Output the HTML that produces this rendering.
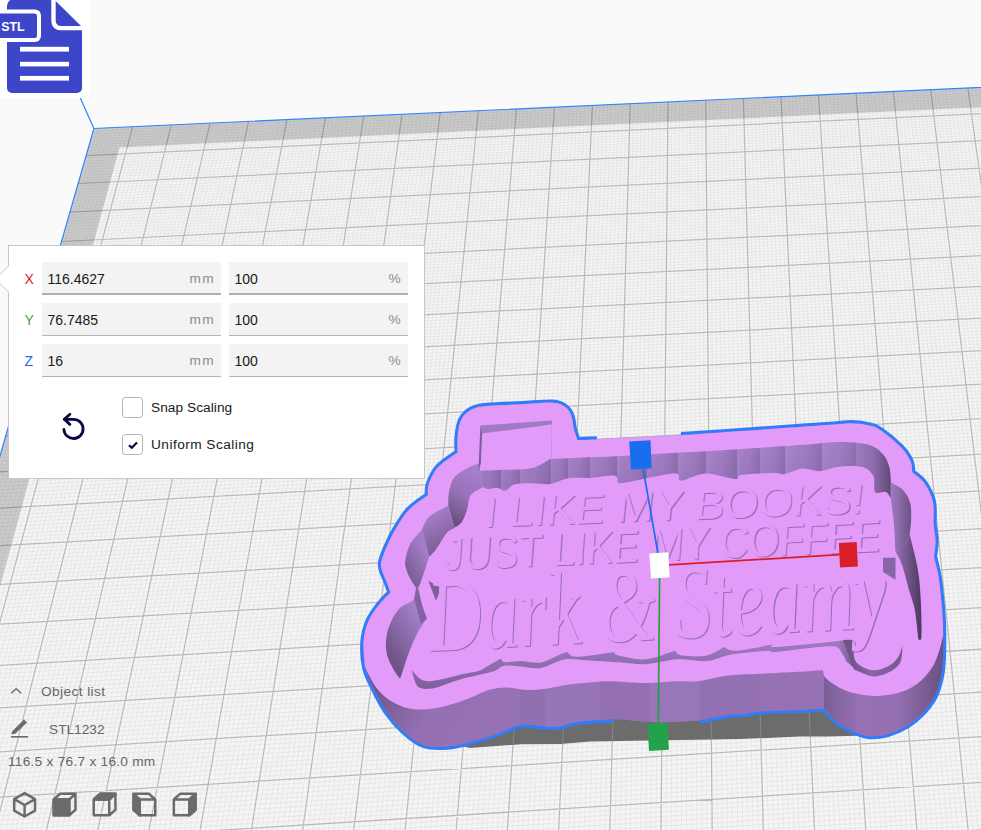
<!DOCTYPE html>
<html><head><meta charset="utf-8"><title>Scale tool</title>
<style>
html,body{margin:0;padding:0}
body{width:981px;height:830px;overflow:hidden;background:#fafafa;position:relative;font-family:"Liberation Sans",sans-serif;font-size:13.7px;color:#191919}
#scene{position:absolute;left:0;top:0}
.abs{position:absolute}
#icon{position:absolute;left:0;top:0;width:91px;height:98px;background:#fff}
#panel{position:absolute;left:8px;top:245px;width:415px;height:232px;background:#fff;border:1px solid #c6c7c8}
.fld{position:absolute;height:32px;background:#f3f3f3;border-bottom:1px solid #b4b4b4;width:179px}
.fld.f{border-bottom:2px solid #b0b0b0;height:31px}
.fld .v{position:absolute;left:5.500px;top:0.600px;line-height:32px;color:#191919;font-size:14px}
.fld .u{position:absolute;right:6px;top:0.600px;line-height:32px;color:#8c8c8c;letter-spacing:1.3px}
.ax{position:absolute;left:16px;width:12px;line-height:32px;font-size:14px;margin-top:-0.500px;margin-left:-0.500px}
.cb{position:absolute;left:113px;width:19px;height:19px;border:1px solid #b4b4b4;border-radius:3.5px;background:#fff}
.cl{position:absolute;left:142px;line-height:21px;white-space:nowrap;letter-spacing:0.05px}
.scn{color:#666;position:absolute;white-space:nowrap}
</style></head><body>
<svg id="scene" width="981" height="830" viewBox="0 0 981 830">
<polygon points="93.9,128.5 1226.9,76.1 1460.4,950.2 -173.4,1060.8" fill="#f5f5f5"/>
<path d="M97.8 128.3L-167.7 1060.4M101.6 128.2L-162.1 1060M105.5 128L-156.4 1059.7M109.4 127.8L-150.8 1059.3M113.3 127.6L-145.1 1058.9M117.2 127.4L-139.5 1058.5M121 127.3L-133.8 1058.1M124.9 127.1L-128.2 1057.7M128.8 126.9L-122.5 1057.4M136.5 126.5L-111.2 1056.6M140.4 126.4L-105.6 1056.2M144.3 126.2L-99.9 1055.8M148.1 126L-94.3 1055.4M152 125.8L-88.7 1055.1M155.9 125.7L-83 1054.7M159.7 125.5L-77.4 1054.3M163.6 125.3L-71.7 1053.9M167.5 125.1L-66.1 1053.5M175.2 124.8L-54.8 1052.8M179.1 124.6L-49.2 1052.4M182.9 124.4L-43.6 1052M186.8 124.2L-38 1051.6M190.7 124L-32.3 1051.3M194.5 123.9L-26.7 1050.9M198.4 123.7L-21.1 1050.5M202.2 123.5L-15.5 1050.1M206.1 123.3L-9.9 1049.7M213.8 123L1.4 1049M217.7 122.8L7 1048.6M221.5 122.6L12.6 1048.2M225.4 122.4L18.2 1047.8M229.2 122.3L23.8 1047.5M233.1 122.1L29.4 1047.1M237 121.9L35 1046.7M240.8 121.7L40.7 1046.3M244.7 121.5L46.3 1045.9M252.4 121.2L57.5 1045.2M256.2 121L63.1 1044.8M260.1 120.8L68.7 1044.4M263.9 120.7L74.3 1044M267.8 120.5L79.8 1043.7M271.6 120.3L85.4 1043.3M275.5 120.1L91 1042.9M279.3 119.9L96.6 1042.5M283.1 119.8L102.2 1042.1M290.8 119.4L113.4 1041.4M294.7 119.2L119 1041M298.5 119L124.6 1040.6M302.4 118.9L130.1 1040.3M306.2 118.7L135.7 1039.9M310 118.5L141.3 1039.5M313.9 118.3L146.9 1039.1M317.7 118.2L152.5 1038.7M321.6 118L158 1038.4M329.2 117.6L169.2 1037.6M333.1 117.4L174.7 1037.2M336.9 117.3L180.3 1036.9M340.7 117.1L185.9 1036.5M344.6 116.9L191.5 1036.1M348.4 116.7L197 1035.7M352.3 116.6L202.6 1035.4M356.1 116.4L208.1 1035M359.9 116.2L213.7 1034.6M367.6 115.9L224.8 1033.9M371.4 115.7L230.4 1033.5M375.2 115.5L235.9 1033.1M379.1 115.3L241.5 1032.7M382.9 115.1L247 1032.3M386.7 115L252.6 1032M390.5 114.8L258.1 1031.6M394.4 114.6L263.7 1031.2M398.2 114.4L269.2 1030.8M405.8 114.1L280.3 1030.1M409.7 113.9L285.9 1029.7M413.5 113.7L291.4 1029.3M417.3 113.6L296.9 1029M421.1 113.4L302.5 1028.6M425 113.2L308 1028.2M428.8 113L313.5 1027.8M432.6 112.8L319.1 1027.5M436.4 112.7L324.6 1027.1M444 112.3L335.7 1026.4M447.9 112.1L341.2 1026M451.7 112L346.7 1025.6M455.5 111.8L352.2 1025.2M459.3 111.6L357.8 1024.9M463.1 111.4L363.3 1024.5M466.9 111.3L368.8 1024.1M470.7 111.1L374.3 1023.7M474.5 110.9L379.8 1023.4M482.2 110.5L390.9 1022.6M486 110.4L396.4 1022.2M489.8 110.2L401.9 1021.9M493.6 110L407.4 1021.5M497.4 109.8L412.9 1021.1M501.2 109.7L418.4 1020.8M505 109.5L423.9 1020.4M508.8 109.3L429.4 1020M512.6 109.1L434.9 1019.6M520.2 108.8L445.9 1018.9M524 108.6L451.4 1018.5M527.8 108.4L456.9 1018.1M531.6 108.3L462.4 1017.8M535.4 108.1L467.9 1017.4M539.2 107.9L473.4 1017M543 107.7L478.9 1016.7M546.8 107.6L484.4 1016.3M550.6 107.4L489.9 1015.9M558.2 107L500.9 1015.2M562 106.9L506.3 1014.8M565.8 106.7L511.8 1014.4M569.6 106.5L517.3 1014.1M573.4 106.3L522.8 1013.7M577.2 106.2L528.3 1013.3M581 106L533.7 1012.9M584.8 105.8L539.2 1012.6M588.6 105.6L544.7 1012.2M596.1 105.3L555.6 1011.5M599.9 105.1L561.1 1011.1M603.7 104.9L566.6 1010.7M607.5 104.7L572.1 1010.4M611.3 104.6L577.5 1010M615.1 104.4L583 1009.6M618.9 104.2L588.4 1009.2M622.6 104L593.9 1008.9M626.4 103.9L599.4 1008.5M634 103.5L610.3 1007.8M637.8 103.3L615.7 1007.4M641.6 103.2L621.2 1007M645.3 103L626.6 1006.7M649.1 102.8L632.1 1006.3M652.9 102.6L637.5 1005.9M656.7 102.5L643 1005.6M660.5 102.3L648.4 1005.2M664.2 102.1L653.9 1004.8M671.8 101.8L664.8 1004.1M675.6 101.6L670.2 1003.7M679.3 101.4L675.7 1003.3M683.1 101.3L681.1 1003M686.9 101.1L686.5 1002.6M690.7 100.9L692 1002.2M694.4 100.7L697.4 1001.9M698.2 100.6L702.8 1001.5M702 100.4L708.3 1001.1M709.5 100L719.1 1000.4M713.3 99.9L724.6 1000M717 99.7L730 999.7M720.8 99.5L735.4 999.3M724.6 99.3L740.8 998.9M728.3 99.2L746.3 998.6M732.1 99L751.7 998.2M735.9 98.8L757.1 997.8M739.6 98.6L762.5 997.5M747.2 98.3L773.4 996.7M750.9 98.1L778.8 996.4M754.7 97.9L784.2 996M758.4 97.8L789.6 995.6M762.2 97.6L795 995.3M766 97.4L800.4 994.9M769.7 97.2L805.8 994.5M773.5 97.1L811.2 994.2M777.2 96.9L816.6 993.8M784.7 96.5L827.4 993.1M788.5 96.4L832.8 992.7M792.3 96.2L838.2 992.3M796 96L843.6 992M799.8 95.9L849 991.6M803.5 95.7L854.4 991.2M807.3 95.5L859.8 990.9M811 95.3L865.2 990.5M814.8 95.2L870.6 990.2M822.3 94.8L881.4 989.4M826 94.6L886.8 989.1M829.8 94.5L892.1 988.7M833.5 94.3L897.5 988.3M837.3 94.1L902.9 988M841 93.9L908.3 987.6M844.7 93.8L913.7 987.2M848.5 93.6L919 986.9M852.2 93.4L924.4 986.5M859.7 93.1L935.2 985.8M863.5 92.9L940.5 985.4M867.2 92.7L945.9 985.1M870.9 92.6L951.3 984.7M874.7 92.4L956.7 984.3M878.4 92.2L962 984M882.2 92L967.4 983.6M885.9 91.9L972.8 983.2M889.6 91.7L978.1 982.9M897.1 91.3L988.8 982.2M900.8 91.2L994.2 981.8M904.6 91L999.6 981.4M908.3 90.8L1004.9 981.1M912 90.7L1010.3 980.7M915.8 90.5L1015.6 980.3M919.5 90.3L1021 980M923.2 90.1L1026.3 979.6M927 90L1031.7 979.3M934.4 89.6L1042.4 978.5M938.1 89.4L1047.7 978.2M941.9 89.3L1053 977.8M945.6 89.1L1058.4 977.4M949.3 88.9L1063.7 977.1M953.1 88.8L1069.1 976.7M956.8 88.6L1074.4 976.4M960.5 88.4L1079.7 976M964.2 88.2L1085.1 975.6M971.7 87.9L1095.7 974.9M975.4 87.7L1101.1 974.6M979.1 87.6L1106.4 974.2M982.8 87.4L1111.7 973.8M986.6 87.2L1117.1 973.5M990.3 87L1122.4 973.1M994 86.9L1127.7 972.8M997.7 86.7L1133 972.4M1001.4 86.5L1138.4 972M1008.9 86.2L1149 971.3M1012.6 86L1154.3 971M1016.3 85.8L1159.6 970.6M1020 85.7L1165 970.2M1023.7 85.5L1170.3 969.9M1027.4 85.3L1175.6 969.5M1031.1 85.1L1180.9 969.2M1034.8 85L1186.2 968.8M1038.6 84.8L1191.5 968.4M1046 84.5L1202.1 967.7M1049.7 84.3L1207.4 967.4M1053.4 84.1L1212.7 967M1057.1 83.9L1218 966.6M1060.8 83.8L1223.3 966.3M1064.5 83.6L1228.6 965.9M1068.2 83.4L1233.9 965.6M1071.9 83.3L1239.2 965.2M1075.6 83.1L1244.5 964.9M1083 82.7L1255.1 964.1M1086.7 82.6L1260.4 963.8M1090.4 82.4L1265.7 963.4M1094.1 82.2L1271 963.1M1097.8 82.1L1276.3 962.7M1101.5 81.9L1281.5 962.3M1105.2 81.7L1286.8 962M1108.9 81.5L1292.1 961.6M1112.6 81.4L1297.4 961.3M1120 81L1307.9 960.6M1123.7 80.9L1313.2 960.2M1127.4 80.7L1318.5 959.8M1131.1 80.5L1323.8 959.5M1134.8 80.3L1329 959.1M1138.5 80.2L1334.3 958.8M1142.2 80L1339.6 958.4M1145.9 79.8L1344.9 958.1M1149.6 79.7L1350.1 957.7M1156.9 79.3L1360.7 957M1160.6 79.2L1365.9 956.6M1164.3 79L1371.2 956.3M1168 78.8L1376.4 955.9M1171.7 78.6L1381.7 955.6M1175.4 78.5L1387 955.2M1179.1 78.3L1392.2 954.9M1182.7 78.1L1397.5 954.5M1186.4 78L1402.7 954.1M1193.8 77.6L1413.2 953.4M1197.5 77.4L1418.5 953.1M1201.2 77.3L1423.7 952.7M1204.8 77.1L1429 952.4M1208.5 76.9L1434.2 952M1212.2 76.8L1439.5 951.7M1215.9 76.6L1444.7 951.3M1219.6 76.4L1450 950.9M1223.2 76.3L1455.2 950.6M93.1 131.2L1227.6 78.6M92.3 133.9L1228.3 81.2M91.6 136.6L1229 83.7M90.8 139.3L1229.6 86.3M90 142L1230.3 88.9M89.2 144.7L1231 91.4M88.5 147.4L1231.7 94M87.7 150.2L1232.4 96.6M86.9 152.9L1233.1 99.2M85.3 158.4L1234.5 104.4M84.5 161.2L1235.2 107.1M83.7 163.9L1235.9 109.7M82.9 166.7L1236.6 112.3M82.1 169.5L1237.3 114.9M81.3 172.3L1238 117.6M80.5 175.1L1238.7 120.2M79.7 177.9L1239.4 122.9M78.9 180.7L1240.1 125.6M77.3 186.3L1241.6 130.9M76.5 189.2L1242.3 133.6M75.7 192L1243 136.3M74.9 194.9L1243.7 139M74 197.7L1244.4 141.7M73.2 200.6L1245.2 144.4M72.4 203.5L1245.9 147.1M71.6 206.3L1246.6 149.8M70.7 209.2L1247.4 152.6M69.1 215L1248.8 158.1M68.3 217.9L1249.6 160.8M67.4 220.9L1250.3 163.6M66.6 223.8L1251 166.4M65.7 226.7L1251.8 169.1M64.9 229.7L1252.5 171.9M64 232.6L1253.3 174.7M63.2 235.6L1254 177.5M62.3 238.5L1254.8 180.3M60.6 244.5L1256.3 186M59.8 247.5L1257 188.8M58.9 250.5L1257.8 191.6M58.1 253.5L1258.5 194.5M57.2 256.5L1259.3 197.3M56.3 259.5L1260.1 200.2M55.5 262.6L1260.8 203.1M54.6 265.6L1261.6 205.9M53.7 268.7L1262.4 208.8M52 274.8L1263.9 214.6M51.1 277.9L1264.7 217.5M50.2 280.9L1265.5 220.4M49.3 284L1266.3 223.3M48.4 287.1L1267 226.3M47.5 290.2L1267.8 229.2M46.6 293.4L1268.6 232.2M45.7 296.5L1269.4 235.1M44.8 299.6L1270.2 238.1M43 305.9L1271.8 244M42.1 309.1L1272.6 247M41.2 312.2L1273.4 250M40.3 315.4L1274.2 253M39.4 318.6L1275 256M38.5 321.8L1275.8 259M37.6 325L1276.6 262.1M36.6 328.2L1277.4 265.1M35.7 331.5L1278.2 268.1M33.8 337.9L1279.9 274.3M32.9 341.2L1280.7 277.3M32 344.4L1281.5 280.4M31 347.7L1282.3 283.5M30.1 351L1283.1 286.6M29.2 354.3L1284 289.7M28.2 357.6L1284.8 292.8M27.3 360.9L1285.6 295.9M26.3 364.2L1286.5 299M24.4 370.9L1288.2 305.3M23.4 374.2L1289 308.5M22.5 377.6L1289.8 311.7M21.5 381L1290.7 314.8M20.5 384.3L1291.5 318M19.6 387.7L1292.4 321.2M18.6 391.1L1293.3 324.4M17.6 394.5L1294.1 327.6M16.6 397.9L1295 330.8M14.7 404.8L1296.7 337.3M13.7 408.2L1297.6 340.5M12.7 411.7L1298.4 343.8M11.7 415.2L1299.3 347.1M10.7 418.6L1300.2 350.3M9.7 422.1L1301.1 353.6M8.7 425.6L1301.9 356.9M7.7 429.1L1302.8 360.2M6.7 432.7L1303.7 363.5M4.7 439.7L1305.5 370.2M3.6 443.3L1306.4 373.5M2.6 446.8L1307.3 376.9M1.6 450.4L1308.2 380.2M0.6 454L1309.1 383.6M-0.5 457.6L1310 387M-1.5 461.2L1310.9 390.4M-2.5 464.8L1311.8 393.8M-3.6 468.4L1312.7 397.2M-5.6 475.7L1314.5 404M-6.7 479.4L1315.4 407.5M-7.7 483L1316.4 410.9M-8.8 486.7L1317.3 414.4M-9.9 490.4L1318.2 417.9M-10.9 494.1L1319.1 421.3M-12 497.8L1320.1 424.8M-13.1 501.5L1321 428.3M-14.1 505.3L1322 431.8M-16.3 512.8L1323.8 438.9M-17.4 516.5L1324.8 442.4M-18.4 520.3L1325.7 446M-19.5 524.1L1326.7 449.6M-20.6 527.9L1327.6 453.1M-21.7 531.7L1328.6 456.7M-22.8 535.6L1329.6 460.3M-23.9 539.4L1330.5 463.9M-25 543.3L1331.5 467.5M-27.2 551L1333.4 474.8M-28.4 554.9L1334.4 478.5M-29.5 558.8L1335.4 482.1M-30.6 562.7L1336.4 485.8M-31.7 566.6L1337.4 489.5M-32.9 570.6L1338.3 493.2M-34 574.5L1339.3 496.9M-35.1 578.5L1340.3 500.6M-36.3 582.5L1341.3 504.3M-38.6 590.5L1343.3 511.8M-39.7 594.5L1344.3 515.6M-40.9 598.5L1345.3 519.3M-42 602.5L1346.3 523.1M-43.2 606.6L1347.4 526.9M-44.3 610.6L1348.4 530.7M-45.5 614.7L1349.4 534.6M-46.7 618.8L1350.4 538.4M-47.9 622.9L1351.4 542.2M-50.2 631.2L1353.5 550M-51.4 635.3L1354.5 553.8M-52.6 639.5L1355.6 557.7M-53.8 643.6L1356.6 561.6M-55 647.8L1357.7 565.6M-56.2 652L1358.7 569.5M-57.4 656.2L1359.8 573.4M-58.6 660.5L1360.8 577.4M-59.8 664.7L1361.9 581.4M-62.3 673.2L1364 589.3M-63.5 677.5L1365.1 593.3M-64.7 681.8L1366.2 597.4M-66 686.1L1367.2 601.4M-67.2 690.4L1368.3 605.4M-68.5 694.8L1369.4 609.5M-69.7 699.1L1370.5 613.6M-71 703.5L1371.6 617.6M-72.2 707.8L1372.7 621.7M-74.7 716.7L1374.9 630M-76 721.1L1376 634.1M-77.3 725.5L1377.1 638.2M-78.6 730L1378.2 642.4M-79.8 734.4L1379.3 646.6M-81.1 738.9L1380.4 650.8M-82.4 743.4L1381.6 655M-83.7 747.9L1382.7 659.2M-85 752.5L1383.8 663.4M-87.6 761.6L1386.1 671.9M-88.9 766.1L1387.2 676.2M-90.2 770.7L1388.4 680.5M-91.6 775.3L1389.5 684.8M-92.9 779.9L1390.7 689.1M-94.2 784.6L1391.8 693.4M-95.5 789.2L1393 697.7M-96.9 793.9L1394.2 702.1M-98.2 798.6L1395.3 706.5M-100.9 808L1397.7 715.3M-102.3 812.7L1398.8 719.7M-103.6 817.5L1400 724.1M-105 822.3L1401.2 728.5M-106.4 827L1402.4 733M-107.8 831.8L1403.6 737.5M-109.1 836.7L1404.8 742M-110.5 841.5L1406 746.5M-111.9 846.3L1407.2 751M-114.7 856.1L1409.6 760.1M-116.1 861L1410.9 764.6M-117.5 865.9L1412.1 769.2M-118.9 870.8L1413.3 773.8M-120.4 875.8L1414.5 778.4M-121.8 880.8L1415.8 783M-123.2 885.7L1417 787.7M-124.6 890.7L1418.3 792.3M-126.1 895.8L1419.5 797M-129 905.9L1422 806.4M-130.4 910.9L1423.3 811.1M-131.9 916L1424.5 815.9M-133.4 921.1L1425.8 820.6M-134.8 926.3L1427.1 825.4M-136.3 931.4L1428.4 830.2M-137.8 936.6L1429.7 835M-139.3 941.8L1430.9 839.8M-140.8 947L1432.2 844.6M-143.8 957.5L1434.8 854.4M-145.3 962.7L1436.1 859.2M-146.8 968L1437.4 864.1M-148.3 973.3L1438.8 869.1M-149.8 978.6L1440.1 874M-151.4 984L1441.4 879M-152.9 989.3L1442.7 883.9M-154.5 994.7L1444.1 888.9M-156 1000.1L1445.4 893.9M-159.1 1010.9L1448.1 904M-160.7 1016.4L1449.4 909.1M-162.2 1021.9L1450.8 914.2M-163.8 1027.4L1452.2 919.3M-165.4 1032.9L1453.5 924.4M-167 1038.4L1454.9 929.5M-168.6 1044L1456.3 934.7M-170.2 1049.6L1457.7 939.8M-171.8 1055.2L1459.1 945" stroke="#e5e5e5" stroke-width="0.9" fill="none"/>
<path d="M132.7 126.7L-116.9 1057M171.3 124.9L-60.5 1053.2M210 123.1L-4.2 1049.4M248.5 121.4L51.9 1045.6M287 119.6L107.8 1041.8M325.4 117.8L163.6 1038M363.7 116L219.3 1034.2M402 114.3L274.8 1030.5M440.2 112.5L330.1 1026.7M478.4 110.7L385.4 1023M516.4 109L440.4 1019.3M554.4 107.2L495.4 1015.5M592.4 105.5L550.2 1011.8M630.2 103.7L604.8 1008.1M668 101.9L659.3 1004.4M705.7 100.2L713.7 1000.8M743.4 98.5L767.9 997.1M781 96.7L822 993.4M818.5 95L876 989.8M856 93.2L929.8 986.1M893.4 91.5L983.5 982.5M930.7 89.8L1037 978.9M967.9 88.1L1090.4 975.3M1005.1 86.3L1143.7 971.7M1042.3 84.6L1196.8 968.1M1079.3 82.9L1249.8 964.5M1116.3 81.2L1302.7 960.9M1153.3 79.5L1355.4 957.3M1190.1 77.8L1408 953.8M1226.9 76.1L1460.4 950.2M86.1 155.7L1233.8 101.8M78.1 183.5L1240.8 128.2M69.9 212.1L1248.1 155.3M61.5 241.5L1255.5 183.1M52.8 271.7L1263.1 211.7M43.9 302.8L1271 241M34.8 334.7L1279 271.2M25.4 367.5L1287.3 302.2M15.7 401.4L1295.8 334.1M5.7 436.2L1304.6 366.9M-4.6 472L1313.6 400.6M-15.2 509L1322.9 435.4M-26.1 547.1L1332.5 471.2M-37.4 586.5L1342.3 508.1M-49 627L1352.5 546.1M-61.1 668.9L1363 585.3M-73.5 712.2L1373.8 625.8M-86.3 757L1385 667.7M-99.6 803.3L1396.5 710.9M-113.3 851.2L1408.4 755.5M-127.5 900.8L1420.8 801.7M-142.3 952.2L1433.5 849.5M-157.6 1005.5L1446.7 899M-173.4 1060.8L1460.4 950.2" stroke="#bababa" stroke-width="1.25" fill="none"/>
<polygon points="93.9,128.5 1226.9,76.1 1232.1,95.5 119.4,147.5 -128.2,1057.7 -173.4,1060.8" fill="#000" fill-opacity="0.17"/>
<path d="M-173.4 1060.8L93.9 128.5L1226.9 76.1M93.9 128.5L80.3 98" stroke="#3282ff" stroke-width="1.2" fill="none"/>
<defs>
<linearGradient id="gw" gradientUnits="userSpaceOnUse" x1="824" y1="0" x2="945" y2="0"><stop offset="0" stop-color="#7b5d96"/><stop offset="0.3" stop-color="#9672b5"/><stop offset="0.6" stop-color="#9470b2"/><stop offset="1" stop-color="#69507f"/></linearGradient>
<linearGradient id="gl" gradientUnits="userSpaceOnUse" x1="365" y1="680" x2="470" y2="740"><stop offset="0" stop-color="#6b5182"/><stop offset="0.6" stop-color="#9470b3"/><stop offset="1" stop-color="#9672b5"/></linearGradient>
<linearGradient id="gt" gradientUnits="userSpaceOnUse" x1="0" y1="446" x2="0" y2="484"><stop offset="0" stop-color="#a680ca"/><stop offset="1" stop-color="#9b77be"/></linearGradient>
<linearGradient id="gA" gradientUnits="userSpaceOnUse" x1="404" y1="575" x2="430" y2="560"><stop offset="0" stop-color="#75598f"/><stop offset="1" stop-color="#a27dc5"/></linearGradient>
<linearGradient id="gB" gradientUnits="userSpaceOnUse" x1="425" y1="515" x2="445" y2="550"><stop offset="0" stop-color="#a680ca"/><stop offset="1" stop-color="#785b93"/></linearGradient>
<linearGradient id="gC" gradientUnits="userSpaceOnUse" x1="480" y1="470" x2="450" y2="520"><stop offset="0" stop-color="#a680ca"/><stop offset="0.5" stop-color="#9873ba"/><stop offset="1" stop-color="#67507e"/></linearGradient>
<linearGradient id="gD" gradientUnits="userSpaceOnUse" x1="386" y1="650" x2="425" y2="625"><stop offset="0" stop-color="#6f5487"/><stop offset="1" stop-color="#a47fc8"/></linearGradient>
<linearGradient id="gcr" gradientUnits="userSpaceOnUse" x1="855" y1="0" x2="892" y2="0"><stop offset="0" stop-color="#a07bc3"/><stop offset="0.5" stop-color="#8d6bab"/><stop offset="1" stop-color="#5f4874"/></linearGradient>
<linearGradient id="gs2" gradientUnits="userSpaceOnUse" x1="890" y1="0" x2="912" y2="0"><stop offset="0" stop-color="#a27dc5"/><stop offset="1" stop-color="#6a5081"/></linearGradient>
<linearGradient id="gs3" gradientUnits="userSpaceOnUse" x1="896" y1="0" x2="921" y2="0"><stop offset="0" stop-color="#9270b1"/><stop offset="1" stop-color="#4d3a5f"/></linearGradient>
<linearGradient id="gp" gradientUnits="userSpaceOnUse" x1="0" y1="640" x2="0" y2="690"><stop offset="0" stop-color="#a07bc3"/><stop offset="1" stop-color="#7d5f99"/></linearGradient>
<linearGradient id="glp" gradientUnits="userSpaceOnUse" x1="838" y1="0" x2="854" y2="0"><stop offset="0" stop-color="#a07bc3"/><stop offset="1" stop-color="#75598f"/></linearGradient>
<linearGradient id="gf" x1="0" y1="0" x2="1" y2="0"><stop offset="0" stop-color="#fff" stop-opacity="0.05"/><stop offset="0.5" stop-color="#000" stop-opacity="0.02"/><stop offset="1" stop-color="#000" stop-opacity="0.13"/></linearGradient>
<linearGradient id="glq" gradientUnits="userSpaceOnUse" x1="850" y1="0" x2="903" y2="0"><stop offset="0" stop-color="#6f5487"/><stop offset="0.4" stop-color="#8666a4"/><stop offset="1" stop-color="#75598f"/></linearGradient>
</defs>
<polygon points="428,738 470,748 521.3,744.2 560,744 590,741.6 741,739 800,736.6 826.6,736.6 866,735.6 850,700 450,700" fill="#6c6c6c"/>
<clipPath id="cs"><polygon points="428,738 470,748 521.3,744.2 560,744 590,741.6 741,739 800,736.6 826.6,736.6 866,735.6 850,700 450,700"/></clipPath>
<g clip-path="url(#cs)"><path d="M368.6 707.4L351.9 845.8M417.8 704.5L403.8 842.5M467 701.5L455.5 839.3M516 698.6L507.1 836M564.9 695.6L558.5 832.7M613.7 692.7L609.8 829.5M662.4 689.7L661.1 826.2M710.9 686.8L712.1 823M759.4 683.9L763.1 819.7M807.7 681L813.9 816.5M856 678.1L864.6 813.3M316.1 732.6L905.9 696.7M309.8 778L909.5 740.9M303.3 825L913.3 786.6" stroke="#858585" stroke-width="1.15" fill="none"/></g>
<path d="M613.8 719.2C607.3 719.7 583.7 721 574.7 722.2C565.7 723.4 564.8 725.9 560 726.6C555.2 727.3 552.2 726.9 545.7 726.6C539.2 726.3 529.4 723.4 521.3 724.6C513.1 725.8 505 731.1 496.8 733.9C488.6 736.7 480.5 739.2 472.3 741.3C464.1 743.4 456 746 447.9 746.6C439.8 747.2 430.8 747.4 423.4 744.9C416 742.4 409.9 737 403.8 731.5C397.7 726 391.8 719.2 386.7 711.9C381.6 704.5 376.8 694.9 373.2 687.4C369.6 679.9 366.6 674.7 365 667C363.4 659.3 362.9 648.6 363.5 641C364.1 633.4 365.7 627.5 368.3 621.4C370.9 615.3 375.7 609.1 379.4 604.3C383.1 599.5 388.6 594.5 390.4 592.5C389.8 590.8 388.1 586 386.7 582.2C385.3 578.5 382.7 573.5 381.8 570C380.9 566.5 380.5 565.2 381.3 561.3C382.1 557.4 384.4 551.9 386.7 546.6C389 541.3 391.6 535.5 395.3 529.4C399 523.3 403.3 515.6 408.7 509.9C414.1 504.2 424.6 497.6 427.8 495.2C428 493.4 427.1 488.9 428.8 484.2C430.5 479.5 433.3 472.4 438.1 467.1C442.9 461.8 454.4 454.8 457.6 452.4C457.6 449.8 457 442 457.6 436.5C458.2 431 458.9 424 461.3 419.4C463.8 414.8 468 411.4 472.3 409.1C476.6 406.9 478.8 406.7 487 405.9C495.2 405.1 510.3 404.7 521.3 404.2C532.3 403.7 545.8 402.2 553.1 402.7C560.4 403.2 562.2 404.9 565.3 407.1C568.3 409.3 570 412 571.4 415.7C572.8 419.4 572.9 425.1 573.9 429.1C574.9 433.2 576.9 438.2 577.5 440C580.8 439.9 593.8 439.5 597 439.4" fill="none" stroke="#2f7dfb" stroke-width="6.2" stroke-linejoin="round" stroke-linecap="butt"/>
<path d="M681 435.2C691 434.5 722.9 432.3 741 431C759.1 429.7 774.4 428.7 789.9 427.6C805.4 426.5 823.8 425.2 834 424.5C844.2 423.8 845.4 423.1 851.1 423.2C856.8 423.3 863.4 424.1 868.2 425.2C873 426.3 874.7 426.2 880 429.8C885.3 433.4 895.1 441.3 900.2 446.5C905.3 451.7 908.5 456.7 910.5 461C912.5 465.3 912 470.3 912.3 472.2C914.3 474 921 478.2 924.5 483.2C928 488.2 931.5 495.3 933 502C934.5 508.7 933.2 516.8 933.6 523.3C934 529.8 935.5 535.5 935.6 541C935.7 546.5 934.3 554 934 556.6C934.8 559.9 937.3 568.9 938.5 576.1C939.7 583.4 940.6 592.8 941.3 600.1C942 607.4 942.5 614.2 942.8 620C943.1 625.8 943.2 629.2 943.2 635C943.2 640.8 943.3 648.3 943 655C942.7 661.7 942.6 668.2 941.2 675C939.8 681.8 938 689.6 934.8 696C931.6 702.4 926.6 708.6 922 713.5C917.4 718.4 913.1 722 907.4 725.4C901.7 728.8 894.3 732.1 887.8 733.9C881.3 735.6 874.7 736.7 868.2 735.9C861.7 735.1 854.3 731.8 848.6 729C842.9 726.2 838.1 722.7 834 719.2C829.9 715.7 825.8 710 824.2 708.2C820.5 708.5 812 709.5 802.2 709.9C792.4 710.3 775.7 710.2 765.5 710.9C755.3 711.6 746.7 713.7 741 714.3C735.3 714.9 738.2 713.6 731.3 714.6C724.4 715.6 704.7 719.5 699.4 720.5" fill="none" stroke="#2f7dfb" stroke-width="6.2" stroke-linejoin="round" stroke-linecap="butt"/>
<path d="M613.8 719.2C599.9 719.2 583.7 721 574.7 722.2C565.7 723.4 564.8 725.9 560 726.6C555.2 727.3 552.2 726.9 545.7 726.6C539.2 726.3 529.4 723.4 521.3 724.6C513.1 725.8 505 731.1 496.8 733.9C488.6 736.7 480.5 739.2 472.3 741.3C464.1 743.4 456 746 447.9 746.6C439.8 747.2 430.8 747.4 423.4 744.9C416 742.4 409.9 737 403.8 731.5C397.7 726 391.8 719.2 386.7 711.9C381.6 704.5 376.8 694.9 373.2 687.4C369.6 679.9 366.6 674.7 365 667C363.4 659.3 362.9 648.6 363.5 641C364.1 633.4 365.7 627.5 368.3 621.4C370.9 615.3 375.7 609.1 379.4 604.3C383.1 599.5 388.6 594.5 390.4 592.5C389.8 590.8 388.1 586 386.7 582.2C385.3 578.5 382.7 573.5 381.8 570C380.9 566.5 380.5 565.2 381.3 561.3C382.1 557.4 384.4 551.9 386.7 546.6C389 541.3 391.6 535.5 395.3 529.4C399 523.3 403.3 515.6 408.7 509.9C414.1 504.2 424.6 497.6 427.8 495.2C428 493.4 427.1 488.9 428.8 484.2C430.5 479.5 433.3 472.4 438.1 467.1C442.9 461.8 454.4 454.8 457.6 452.4C457.6 449.8 457 442 457.6 436.5C458.2 431 458.9 424 461.3 419.4C463.8 414.8 468 411.4 472.3 409.1C476.6 406.9 478.8 406.7 487 405.9C495.2 405.1 510.3 404.7 521.3 404.2C532.3 403.7 545.8 402.2 553.1 402.7C560.4 403.2 562.2 404.9 565.3 407.1C568.3 409.3 570 412 571.4 415.7C572.8 419.4 572.9 425.1 573.9 429.1C574.9 433.2 576.9 438.2 577.5 440C580.8 439.9 593.8 439.5 597 439.4C611 438.7 667 435.9 681 435.2C691 434.5 722.9 432.3 741 431C759.1 429.7 774.4 428.7 789.9 427.6C805.4 426.5 823.8 425.2 834 424.5C844.2 423.8 845.4 423.1 851.1 423.2C856.8 423.3 863.4 424.1 868.2 425.2C873 426.3 874.7 426.2 880 429.8C885.3 433.4 895.1 441.3 900.2 446.5C905.3 451.7 908.5 456.7 910.5 461C912.5 465.3 912 470.3 912.3 472.2C914.3 474 921 478.2 924.5 483.2C928 488.2 931.5 495.3 933 502C934.5 508.7 933.2 516.8 933.6 523.3C934 529.8 935.5 535.5 935.6 541C935.7 546.5 934.3 554 934 556.6C934.8 559.9 937.3 568.9 938.5 576.1C939.7 583.4 940.6 592.8 941.3 600.1C942 607.4 942.5 614.2 942.8 620C943.1 625.8 943.2 629.2 943.2 635C943.2 640.8 943.3 648.3 943 655C942.7 661.7 942.6 668.2 941.2 675C939.8 681.8 938 689.6 934.8 696C931.6 702.4 926.6 708.6 922 713.5C917.4 718.4 913.1 722 907.4 725.4C901.7 728.8 894.3 732.1 887.8 733.9C881.3 735.6 874.7 736.7 868.2 735.9C861.7 735.1 854.3 731.8 848.6 729C842.9 726.2 838.1 722.7 834 719.2C829.9 715.7 825.8 710 824.2 708.2C820.5 708.5 812 709.5 802.2 709.9C792.4 710.3 775.7 710.2 765.5 710.9C755.3 711.6 746.7 713.7 741 714.3C735.3 714.9 738.2 713.6 731.3 714.6C724.4 715.6 704.7 719.5 699.4 720.5C692.5 720.8 672.2 722.4 657.9 722.2C643.6 722 627.7 719.2 613.8 719.2Z" fill="#9672b5"/>
<path d="M597 439.400L681 435.200" stroke="#b9a0c6" stroke-width="1" fill="none"/>
<clipPath id="cw"><path d="M365 667C365.8 668.5 367.7 672.8 369.6 676.2C371.5 679.6 373.4 683.8 376.3 687.5C379.2 691.2 382.3 695.1 387.1 698.4C391.9 701.7 399.2 705.5 405.2 707.4C411.2 709.3 417.3 709.7 423.3 709.6C429.3 709.5 435.1 708.4 441.4 707C447.7 705.6 455.6 703.1 461.3 701.2C467 699.3 470.9 697.3 475.7 695.4C480.5 693.5 485 690.9 490.2 689.6C495.4 688.3 500.6 687.4 506.6 687.4C512.6 687.4 519.6 689.7 526.1 689.9C532.6 690.1 539.2 689.5 545.7 688.7C552.2 687.9 557.9 686 565.3 685C572.7 684 582.7 683.1 590 682.5C597.3 681.9 599.6 681.2 608.9 681.3C618.2 681.4 634.6 683 645.6 683C656.6 683 666.4 681.6 675 681.3C683.6 681 688.4 682.2 697 681.3C705.6 680.4 716.6 676.9 726.4 675.7C736.2 674.5 745.1 674.6 755.7 674C766.3 673.4 778.7 672.9 789.9 672.3C801.1 671.7 817.5 670.6 823 670.3C823.4 671.5 822.8 674.8 825.4 677.6C828 680.5 833.8 684.8 838.9 687.4C844 690 849.5 692.1 856 693.5C862.5 694.9 870.7 696.2 878 696C885.3 695.8 893.5 694.3 900 692.3C906.5 690.3 911.9 687.9 917.2 683.8C922.5 679.7 928.1 673.4 931.8 667.9C935.5 662.4 937.3 656.2 939.2 650.7C941.1 645.2 942.5 637.6 943.2 635C943.2 638.3 943.3 648.3 943 655C942.7 661.7 942.6 668.2 941.2 675C939.8 681.8 938 689.6 934.8 696C931.6 702.4 926.6 708.6 922 713.5C917.4 718.4 913.1 722 907.4 725.4C901.7 728.8 894.3 732.1 887.8 733.9C881.3 735.6 874.7 736.7 868.2 735.9C861.7 735.1 854.3 731.8 848.6 729C842.9 726.2 838.1 722.7 834 719.2C829.9 715.7 825.8 710 824.2 708.2C820.5 708.5 812 709.5 802.2 709.9C792.4 710.3 775.7 710.2 765.5 710.9C755.3 711.6 746.7 713.7 741 714.3C735.3 714.9 738.2 713.6 731.3 714.6C724.4 715.6 704.7 719.5 699.4 720.5C692.5 720.8 672.2 722.4 657.9 722.2C643.6 722 627.7 719.2 613.8 719.2C599.9 719.2 583.7 721 574.7 722.2C565.7 723.4 564.8 725.9 560 726.6C555.2 727.3 552.2 726.9 545.7 726.6C539.2 726.3 529.4 723.4 521.3 724.6C513.1 725.8 505 731.1 496.8 733.9C488.6 736.7 480.5 739.2 472.3 741.3C464.1 743.4 456 746 447.9 746.6C439.8 747.2 430.8 747.4 423.4 744.9C416 742.4 409.9 737 403.8 731.5C397.7 726 391.8 719.2 386.7 711.9C381.6 704.5 376.8 694.9 373.2 687.4C369.6 679.9 366.4 670.4 365 667Z"/></clipPath>
<g clip-path="url(#cw)"><rect x="360" y="600" width="165" height="160" fill="url(#gl)"/><rect x="823.5" y="600" width="125" height="150" fill="url(#gw)"/>
<rect x="520" y="660" width="25" height="80" fill="#9170b0"/>
<rect x="545" y="660" width="55" height="80" fill="#9874b8"/>
<rect x="600" y="660" width="50" height="80" fill="#9470b3"/>
<rect x="650" y="660" width="50" height="80" fill="#9975b9"/>
<rect x="700" y="660" width="60" height="80" fill="#9370b2"/>
<rect x="760" y="660" width="64" height="80" fill="#9672b5"/>
</g>
<path d="M365 667C364.8 662.7 362.9 648.6 363.5 641C364.1 633.4 365.7 627.5 368.3 621.4C370.9 615.3 375.7 609.1 379.4 604.3C383.1 599.5 388.6 594.5 390.4 592.5C389.8 590.8 388.1 586 386.7 582.2C385.3 578.5 382.7 573.5 381.8 570C380.9 566.5 380.5 565.2 381.3 561.3C382.1 557.4 384.4 551.9 386.7 546.6C389 541.3 391.6 535.5 395.3 529.4C399 523.3 403.3 515.6 408.7 509.9C414.1 504.2 424.6 497.6 427.8 495.2C428 493.4 427.1 488.9 428.8 484.2C430.5 479.5 433.3 472.4 438.1 467.1C442.9 461.8 454.4 454.8 457.6 452.4C457.6 449.8 457 442 457.6 436.5C458.2 431 458.9 424 461.3 419.4C463.8 414.8 468 411.4 472.3 409.1C476.6 406.9 478.8 406.7 487 405.9C495.2 405.1 510.3 404.7 521.3 404.2C532.3 403.7 545.8 402.2 553.1 402.7C560.4 403.2 562.2 404.9 565.3 407.1C568.3 409.3 570 412 571.4 415.7C572.8 419.4 572.9 425.1 573.9 429.1C574.9 433.2 576.9 438.2 577.5 440C580.8 439.9 593.8 439.5 597 439.4C611 438.7 667 435.9 681 435.2C691 434.5 722.9 432.3 741 431C759.1 429.7 774.4 428.7 789.9 427.6C805.4 426.5 823.8 425.2 834 424.5C844.2 423.8 845.4 423.1 851.1 423.2C856.8 423.3 863.4 424.1 868.2 425.2C873 426.3 874.7 426.2 880 429.8C885.3 433.4 895.1 441.3 900.2 446.5C905.3 451.7 908.5 456.7 910.5 461C912.5 465.3 912 470.3 912.3 472.2C914.3 474 921 478.2 924.5 483.2C928 488.2 931.5 495.3 933 502C934.5 508.7 933.2 516.8 933.6 523.3C934 529.8 935.5 535.5 935.6 541C935.7 546.5 934.3 554 934 556.6C934.8 559.9 937.3 568.9 938.5 576.1C939.7 583.4 940.6 592.8 941.3 600.1C942 607.4 942.5 614.2 942.8 620C943.1 625.8 943.1 632.5 943.2 635C942.5 637.6 941.1 645.2 939.2 650.7C937.3 656.2 935.5 662.4 931.8 667.9C928.1 673.4 922.5 679.7 917.2 683.8C911.9 687.9 906.5 690.3 900 692.3C893.5 694.3 885.3 695.8 878 696C870.7 696.2 862.5 694.9 856 693.5C849.5 692.1 844 690 838.9 687.4C833.8 684.8 828 680.5 825.4 677.6C822.8 674.8 823.4 671.5 823 670.3C817.5 670.6 801.1 671.7 789.9 672.3C778.7 672.9 766.3 673.4 755.7 674C745.1 674.6 736.2 674.5 726.4 675.7C716.6 676.9 705.6 680.4 697 681.3C688.4 682.2 683.6 681 675 681.3C666.4 681.6 656.6 683 645.6 683C634.6 683 618.2 681.4 608.9 681.3C599.6 681.2 597.3 681.9 590 682.5C582.7 683.1 572.7 684 565.3 685C557.9 686 552.2 687.9 545.7 688.7C539.2 689.5 532.6 690.1 526.1 689.9C519.6 689.7 512.6 687.4 506.6 687.4C500.6 687.4 495.4 688.3 490.2 689.6C485 690.9 480.5 693.5 475.7 695.4C470.9 697.3 467 699.3 461.3 701.2C455.6 703.1 447.7 705.6 441.4 707C435.1 708.4 429.3 709.5 423.3 709.6C417.3 709.7 411.2 709.3 405.2 707.4C399.2 705.5 391.9 701.7 387.1 698.4C382.3 695.1 379.2 691.2 376.3 687.5C373.4 683.8 371.5 679.6 369.6 676.2C367.7 672.8 365.8 668.5 365 667Z" fill="#e39bfa"/>
<clipPath id="cb1"><path d="M478.9 463.5C478.9 464.7 478.9 469.6 478.9 470.8C482 470.7 489.1 470.4 497.8 470C506.5 469.6 522.3 470.1 531 468.3C539.7 466.5 547 460.6 550.2 459C556.8 458.7 578.8 457.8 590 457.3C601.2 456.9 602.4 457.1 617.4 456.3C632.4 455.5 659.4 453.8 680 452.6C700.6 451.4 720.7 450.2 741 448.9C761.3 447.6 785.4 446 802 444.8C818.6 443.6 829.6 441.9 840.7 441.9C851.9 441.9 861.9 442.9 868.9 445C875.9 447.1 879.6 450.7 883 454.4C886.4 458.1 887.9 462.3 889.2 467C890.5 471.7 890.5 477.4 890.8 482.6C891.1 487.8 890.8 495.7 890.8 498.3C890 497.2 888.6 493.1 886 492C883.4 490.9 877.2 494.6 875.1 492C873 489.4 875.7 480.6 873.6 476.4C871.5 472.2 868.6 468.6 862.6 467C856.6 465.4 844.7 466.3 837.6 467C830.5 467.7 825.9 470.8 820 471C814.1 471.2 808 468 802.2 468.5C796.4 469 789.9 473.2 785 474C780.1 474.8 780.3 472.8 773 473C765.7 473.2 747.3 474 741 475C734.7 476 740.9 479.3 735 479C729.1 478.7 714.5 473.1 705.5 473.4C696.5 473.7 685.9 480.7 681 480.7C676.1 480.7 681.8 473.8 676.1 473.4C670.4 473 656.2 476.7 646.8 478.3C637.4 479.9 625.2 483.6 619.9 483.2C614.6 482.8 620 476.7 615 475.8C610 474.9 597.8 477.6 590 478C582.2 478.4 575.2 477.3 568.5 478.3C561.8 479.3 556.1 483.2 550 484C543.9 484.8 537.6 483.1 531.8 483.2C526 483.2 519.5 483.1 515 484.3C510.5 485.5 507.9 490 505 490.6C502.1 491.2 501.4 488.5 497.8 487.9C494.2 487.3 486.5 491.1 483.4 487C480.2 482.9 479.6 467.4 478.9 463.5Z"/></clipPath>
<g clip-path="url(#cb1)"><rect x="470" y="430" width="460" height="90" fill="url(#gt)"/><rect x="855" y="430" width="70" height="120" fill="url(#gcr)"/>
<rect x="478" y="430" width="23" height="70" fill="url(#gf)"/>
<rect x="501" y="430" width="19" height="70" fill="url(#gf)"/>
<rect x="520" y="430" width="31" height="70" fill="url(#gf)"/>
<rect x="551" y="430" width="17" height="70" fill="url(#gf)"/>
<rect x="568" y="430" width="22" height="70" fill="url(#gf)"/>
<rect x="590" y="430" width="27" height="70" fill="url(#gf)"/>
<rect x="617" y="430" width="30" height="70" fill="url(#gf)"/>
<rect x="647" y="430" width="31" height="70" fill="url(#gf)"/>
<rect x="678" y="430" width="28" height="70" fill="url(#gf)"/>
<rect x="706" y="430" width="31" height="70" fill="url(#gf)"/>
<rect x="737" y="430" width="23" height="70" fill="url(#gf)"/>
<rect x="760" y="430" width="25" height="70" fill="url(#gf)"/>
<rect x="785" y="430" width="37" height="70" fill="url(#gf)"/>
<rect x="822" y="430" width="34" height="70" fill="url(#gf)"/>
</g>
<path d="M448.2 505.1C448.4 502.8 448.1 496.2 449.1 491.5C450.2 486.8 451.2 481.2 454.5 477.1C457.8 473.1 464.8 469.5 468.9 467.2C473 464.9 477.2 464.1 478.9 463.5C479.2 465.4 480.2 471.1 481 475C481.8 478.9 483 485 483.4 487C481.3 488.4 473.4 491.4 470.7 495.2C468 499 468.6 505.1 467.1 509.6C465.6 514.1 463.8 519.3 461.7 522.3C459.6 525.3 455.7 526.8 454.5 527.7C453.4 523.9 449.2 508.9 448.2 505.1Z" fill="url(#gC)"/>
<path d="M422 529.5C423.2 527.4 425 520.7 429.2 516.8C433.4 512.9 444.1 507.9 447.3 506C450.5 504.1 448.1 505.2 448.2 505.1C449.2 508.9 453.4 523.9 454.5 527.7C453.3 528.5 449.4 530.1 447.3 532.2C445.2 534.3 443.9 537.1 441.8 540.3C439.7 543.5 436.7 548.5 434.6 551.2C432.5 553.9 430.1 555.7 429.2 556.6C428 552.1 423.2 534 422 529.5Z" fill="url(#gB)"/>
<path d="M416.3 588C415.4 586.7 412.8 583.4 411 580C409.2 576.6 406.6 571 405.7 567.4C404.8 563.8 404.9 562.3 405.7 558.4C406.4 554.5 407.6 548.6 410.2 543.9C412.8 539.2 419.1 532.8 421.1 530.4C423.1 528 421.9 529.6 422 529.5C423.2 534 428 552.1 429.2 556.6C427.7 561.1 422.3 578.5 420.2 583.7C418.1 588.9 416.9 587.3 416.3 588Z" fill="url(#gA)"/>
<path d="M416.1 587.2C415.8 589.2 416.9 595.4 414.2 598.9C411.5 602.4 403.7 604.1 399.8 608C395.9 611.9 393 617.3 390.7 622.4C388.4 627.5 386.8 633.3 386.2 638.7C385.6 644.1 385.9 649.9 387.1 655C388.3 660.1 391.4 665.6 393.5 669.5C395.6 673.4 398.8 677 399.8 678.5C400 678 399.8 679.8 401.2 675.7C402.6 671.7 405.7 661.1 408.3 654.2C410.9 647.3 414 639.9 416.9 634.3C419.8 628.6 423.8 622.9 425.5 620.3C427.2 617.7 426.7 619 426.9 618.8C426.1 616.7 423.9 611.5 422.4 606.2C420.9 600.9 418.6 590.4 417.9 587.2Z" fill="url(#gD)"/>
<path d="M416.100 587.200L417.900 587.200L422.400 606.200L426.900 618.800L421 624L414.200 598.900Z" fill="#8262a0"/>
<path d="M428.400 580.800L441.400 588.100L436 600.700Z" fill="#7d5f99"/>
<path d="M890.8 482.6C892.9 483.9 900.1 487 903.3 490.4C906.5 493.8 908.9 498 910.2 503C911.5 508 911.2 515 911.1 520.2C911 525.4 909.9 531.9 909.6 534.3C908.8 536.1 907.4 542.1 905 545C902.6 547.9 897.1 550.4 895.5 551.5C895.2 546.8 894.7 532.2 893.9 523.3C893.1 514.4 891.3 505.1 890.8 498.3C890.3 491.5 890.8 485.2 890.8 482.6Z" fill="url(#gs2)"/>
<path d="M909.6 534.3C910.9 539.8 915.6 557 917.4 567.2C919.2 577.4 919.8 583.8 920.5 595.3C921.2 606.8 921.9 628.7 921.5 636C921.1 643.3 918.8 638.7 918.3 639.2C917.7 634.3 916.2 617.9 914.8 610C913.3 602.1 911.4 598.3 909.6 592C907.8 585.7 905.7 577.2 904.2 572C902.7 566.8 902 564.3 900.5 560.9C899 557.5 896.3 553.1 895.5 551.5C897.1 550.4 902.6 547.9 905 545C907.4 542.1 908.8 536.1 909.6 534.3Z" fill="url(#gs3)"/>
<path d="M883 557.800L895.500 557.800L895.500 579.700L883 572Z" fill="#8666a4"/>
<path d="M480.400 425.500L551.800 420.600L551.800 424.500L482.100 433.500Z" fill="#a07bc3"/>
<path d="M480.400 425.500L482.100 433.500L480.900 463.400L478.400 470.700Z" fill="#7d5f99"/>
<path d="M551.800 424.500L551.400 458.700" stroke="#d28fe9" stroke-width="1" fill="none"/>
<path d="M411.5 669.5C412.9 671 416.8 676.5 419.7 678.5C422.6 680.5 424.5 681.2 428.7 681.2C432.9 681.2 439.3 679.7 445 678.5C450.7 677.3 457.7 675.2 463.1 674C468.5 672.8 473.6 672.5 477.5 671.3C481.4 670.1 482.7 668.8 486.6 666.7C490.5 664.6 498.6 660 501 658.6C501.6 659.2 501.3 661.8 504.7 662.2C508.1 662.6 515.3 661 521.3 661C527.3 661 534.3 663.6 540.8 662.5C547.2 661.4 555.6 656.1 560 654.4C564.4 652.6 566.1 652.4 567.3 652C568.9 652.8 569.4 656.8 577.1 656.8C584.9 656.8 607.7 652.8 613.8 652C614.6 652.6 613.4 654.4 618.7 655.6C624 656.8 636.2 660.1 645.6 659.3C655 658.5 670.1 652.1 675 650.7C676.2 651.5 677 654.8 682.3 655.6C687.6 656.4 699.9 657 706.8 655.6C713.7 654.2 721 648.5 723.9 647.1C725.9 647.7 728 651.1 736.1 650.7C744.2 650.3 766.7 645.6 772.8 644.6C773.2 645 766.2 647.5 775.2 647.1C784.2 646.7 816 643.2 826.6 642.2C837.2 641.2 835.6 641.4 838.9 641C842.2 640.6 843.8 639.7 846.2 639.7C848.6 639.7 852.3 640.8 853.5 641C853.5 642.5 855.1 647.6 853.5 650C851.9 652.4 846.2 655.9 843.8 655.6C841.4 655.3 841.8 649.8 838.9 648.3C836 646.8 837.2 645.7 826.6 646.3C816 646.9 785 651.3 775.2 652C765.4 652.7 775.3 650.3 768 650.7C760.7 651.1 741.5 652.7 731.3 654.4C721.1 656.1 715.8 660.2 706.8 661C697.8 661.8 687.6 658.8 677.4 659.3C667.2 659.8 655 663.7 645.6 664.2C636.2 664.7 630.5 663.1 621.2 662.5C611.9 661.9 599.3 661 590 660.5C580.7 660 573.5 658.1 565.3 659.3C557.1 660.5 548.1 666.7 540.8 667.9C533.5 669.1 527.3 667 521.3 666.6C515.3 666.2 509 665.2 504.7 665.8C500.4 666.4 499.2 669 495.6 670.4C492 671.8 488.4 672.6 483 674C477.6 675.4 469.1 676.9 463.1 678.5C457.1 680.1 451.9 682.2 446.8 683.9C441.7 685.5 437.1 687.9 432.3 688.4C427.5 688.9 421.4 689.8 417.9 686.6C414.4 683.5 412.6 672.4 411.5 669.5Z" fill="url(#gp)"/>
<path d="M838.900 641L853.500 640.500L853.900 668L846 661L843.800 655.600L838.900 648.300Z" fill="url(#glp)"/>
<path d="M843 640C844.8 644.7 851.3 663 853.5 668C855.7 673 852.7 668.9 856 670.3C859.3 671.7 867.8 676 873.1 676.4C878.4 676.8 883.3 675 887.8 672.8C892.3 670.6 897.5 667.5 900 663C902.5 658.5 902.1 648.7 902.5 645.8C901.7 647.8 900.1 654.6 897.6 658.1C895.1 661.6 891.9 664.6 887.8 666.6C883.7 668.6 878 670.7 873.1 670.3C868.2 669.9 861.7 666.9 858.4 664.2C855.1 661.6 854.3 658.3 853.5 654.4C852.7 650.5 855.2 643.4 853.5 641C851.8 638.6 844.8 640.2 843 640Z" fill="url(#glq)"/>
<text transform="matrix(0.940 -0.0348 0.100 1 487.1 528.0)" font-family="Liberation Sans, sans-serif" font-style="italic" font-size="42" textLength="403.2" lengthAdjust="spacingAndGlyphs" fill="#966fb4">I LIKE MY BOOKS!</text>
<text transform="matrix(0.940 -0.0348 0.100 1 486.0 527.0)" font-family="Liberation Sans, sans-serif" font-style="italic" font-size="42" textLength="403.2" lengthAdjust="spacingAndGlyphs" fill="#e39bfa">I LIKE MY BOOKS!</text>
<text transform="matrix(0.860 -0.0370 0.100 1 445.6 571.0)" font-family="Liberation Sans, sans-serif" font-style="italic" font-size="46" textLength="508.7" lengthAdjust="spacingAndGlyphs" fill="#966fb4">JUST LIKE MY COFFEE</text>
<text transform="matrix(0.860 -0.0370 0.100 1 444.5 570.0)" font-family="Liberation Sans, sans-serif" font-style="italic" font-size="46" textLength="508.7" lengthAdjust="spacingAndGlyphs" fill="#e39bfa">JUST LIKE MY COFFEE</text>
<text transform="matrix(0.710 -0.0369 0.080 1 432.1 652.0)" font-family="Liberation Serif, serif" font-style="italic" font-size="104" textLength="645.1" lengthAdjust="spacingAndGlyphs" fill="#966fb4">Dark &amp; Steamy</text>
<text transform="matrix(0.710 -0.0369 0.080 1 431.0 651.0)" font-family="Liberation Serif, serif" font-style="italic" font-size="104" textLength="645.1" lengthAdjust="spacingAndGlyphs" fill="#e39bfa">Dark &amp; Steamy</text>
<path d="M643.200 469L657.900 553" stroke="#196ef0" stroke-width="1.700"/>
<path d="M669 564.900L839.500 554.600" stroke="#da1e28" stroke-width="1.700"/>
<path d="M659.600 578L658.300 724" stroke="#24a237" stroke-width="1.700"/>
<path d="M629.200 441.400L650.500 440.200L651.700 468.300L631 469.500Z" fill="#196ef0"/>
<path d="M649.300 553.400L668.400 552.200L669.600 577.200L651 578.400Z" fill="#fff"/>
<path d="M838.900 543.100L856.700 541.900L857.900 566.400L840 567.600Z" fill="#da1e28"/>
<path d="M647.600 724L667.700 722.900L668.900 749.800L649 751Z" fill="#24a24a"/>
</svg>

<div id="icon">
<svg width="91" height="98" viewBox="0 0 91 98">
<path d="M14 -1H51.300V21.300a9 9 0 0 0 9 9H82V88a5 5 0 0 1 -5 5H12a5 5 0 0 1 -5 -5V6a7 7 0 0 1 7 -7Z" fill="#3d46c8"/>
<path d="M55.700 1L81 26H61a5.300 5.300 0 0 1 -5.300 -5.300Z" fill="#3d46c8"/>
<rect x="-6" y="9.500" width="47" height="32.500" rx="6" fill="#fff"/>
<rect x="-6" y="13.500" width="43" height="24.500" rx="2.500" fill="#3d46c8"/>
<rect x="20" y="46.800" width="49" height="4.800" fill="#fff"/>
<rect x="20" y="61.800" width="49" height="4.600" fill="#fff"/>
<rect x="20" y="75.900" width="49" height="4.700" fill="#fff"/>
<text x="1.200" y="31.400" font-family="Liberation Sans, sans-serif" font-weight="bold" font-size="13.300" textLength="23.500" lengthAdjust="spacingAndGlyphs" fill="#fff">STL</text>
</svg>
</div>

<div id="panel">
<svg class="abs" style="left:-14px;top:19px" width="14" height="28" viewBox="0 0 14 28"><path d="M14 0.500L0.500 14L14 27.500Z" fill="#fff"/><path d="M14 0.500L0.500 14L14 27.500" fill="none" stroke="#c6c7c8" stroke-width="1"/></svg>
<div class="ax" style="top:17px;color:#da1e28">X</div>
<div class="ax" style="top:58px;color:#4aa33c">Y</div>
<div class="ax" style="top:99px;color:#196ef0">Z</div>
<div class="fld f" style="left:33px;top:16px"><span class="v">116.4627</span><span class="u">mm</span></div>
<div class="fld f" style="left:220px;top:16px"><span class="v">100</span><span class="u">%</span></div>
<div class="fld" style="left:33px;top:57px"><span class="v">76.7485</span><span class="u">mm</span></div>
<div class="fld" style="left:220px;top:57px"><span class="v">100</span><span class="u">%</span></div>
<div class="fld" style="left:33px;top:98px"><span class="v">16</span><span class="u">mm</span></div>
<div class="fld" style="left:220px;top:98px"><span class="v">100</span><span class="u">%</span></div>
<svg class="abs" style="left:50px;top:164px" width="32" height="34" viewBox="0 0 32 34">
<path d="M5.400 9.300H14.500A9.600 9.600 0 1 1 4.900 19.500" fill="none" stroke="#08073f" stroke-width="2.800" stroke-linecap="round"/>
<path d="M10.900 4.200L5.300 9.300L10.900 14.400" fill="none" stroke="#08073f" stroke-width="2.800" stroke-linecap="round" stroke-linejoin="round"/>
</svg>
<div class="cb" style="top:151px"></div>
<div class="cl" style="top:151px">Snap Scaling</div>
<div class="cb" style="top:188px"><svg class="abs" style="left:4px;top:4px" width="12" height="12" viewBox="0 0 12 12"><path d="M2 6.200L4.800 8.800L10 3.400" fill="none" stroke="#08073f" stroke-width="2.200"/></svg></div>
<div class="cl" style="top:188px;letter-spacing:0.45px">Uniform Scaling</div>
</div>

<svg class="abs" style="left:8px;top:684px" width="18" height="14" viewBox="0 0 18 14"><path d="M3.200 9.300L8.200 4.700L13.200 9.300" fill="none" stroke="#6b6b6b" stroke-width="1.300"/></svg>
<div class="scn" style="left:41px;top:682.7px;line-height:18px;letter-spacing:0.4px">Object list</div>
<svg class="abs" style="left:9px;top:716px" width="22" height="24" viewBox="0 0 22 24"><path d="M3 15.500L15 3.500L18 6.500L6.500 17.500L2.500 18.500Z" fill="#6b6b6b"/><rect x="2" y="20" width="17" height="1.600" fill="#6b6b6b"/></svg>
<div class="scn" style="left:49px;top:720.5px;line-height:18px">STL1232</div>
<div class="scn" style="left:8px;top:753px;line-height:18px;letter-spacing:0.25px">116.5 x 76.7 x 16.0 mm</div>
<svg class="abs" style="left:0;top:786px" width="220" height="44" viewBox="0 786 220 44" id="views">
<g fill="none" stroke="#6b6b6b" stroke-width="2.5" stroke-linejoin="round">
<path d="M24.6 793.1L35 799.1V810.700L24.600 816.500L14.200 810.700V799.100ZM14.200 799.100L24.600 805L35 799.100M24.600 805V816.500"/>
<path d="M53.75 799.45L59.95 793.85L75.45 793.85L75.45 809.75L69.25 815.35L53.75 815.35ZM53.75 799.45L69.25 799.45L69.25 815.35M69.25 799.45L75.45 793.85"/><path d="M53.75 799.45L69.25 799.45L69.25 815.35L53.75 815.35Z" fill="#6b6b6b"/>
<path d="M93.75 799.45L99.95 793.85L115.45 793.85L115.45 809.75L109.25 815.35L93.75 815.35ZM93.75 799.45L109.25 799.45L109.25 815.35M109.25 799.45L115.45 793.85"/><path d="M93.75 799.45L99.95 793.85L115.45 793.85L109.25 799.45Z" fill="#6b6b6b"/>
<path d="M155.25 799.45L149.05 793.85L133.55 793.85L133.55 809.75L139.75 815.35L155.25 815.35ZM155.25 799.45L139.75 799.45L139.75 815.35M139.75 799.45L133.55 793.85"/><path d="M139.75 799.45L133.55 793.85L133.55 809.75L139.75 815.35Z" fill="#6b6b6b"/>
<path d="M173.85 799.45L180.05 793.85L195.55 793.85L195.55 809.75L189.35 815.35L173.85 815.35ZM173.85 799.45L189.35 799.45L189.35 815.35M189.35 799.45L195.55 793.85"/><path d="M189.35 799.45L195.55 793.85L195.55 809.75L189.35 815.35Z" fill="#6b6b6b"/>
</g>
</svg>
</body></html>
